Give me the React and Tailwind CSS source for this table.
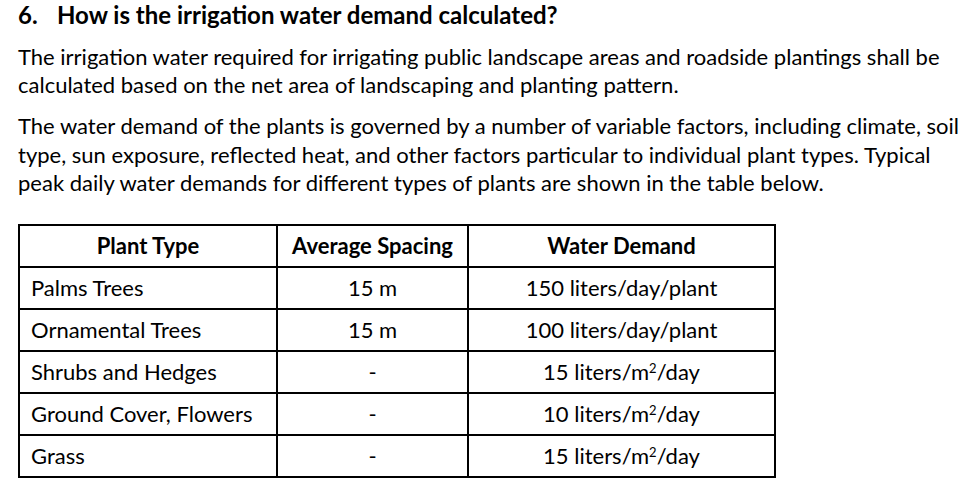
const rows = [
  { type: 'Palms Trees', spacing: '15 m', demand: <>150 liters/day/plant</> },
  { type: 'Ornamental Trees', spacing: '15 m', demand: <>100 liters/day/plant</> },
  { type: 'Shrubs and Hedges', spacing: '-', demand: <>15 liters/m<sup className="text-[13px]">2</sup>/day</> },
  { type: 'Ground Cover, Flowers', spacing: '-', demand: <>10 liters/m<sup className="text-[13px]">2</sup>/day</> },
  { type: 'Grass', spacing: '-', demand: <>15 liters/m<sup className="text-[13px]">2</sup>/day</> },
];

export default function App() {
  return (
    <div className="w-[962px] h-[481px] bg-white text-black overflow-hidden pl-[18px] pt-px font-['Lato',sans-serif]">
      <h2 className="flex text-[24px] font-bold leading-[28px] whitespace-nowrap">
        <span className="w-[39px]">6.</span>
        <span>How is the irrigation water demand calculated?</span>
      </h2>

      <p className="mt-[14px] text-[22px] leading-[27.5px] whitespace-nowrap">
        The irrigation water required for irrigating public landscape areas and roadside plantings shall be<br />
        calculated based on the net area of landscaping and planting pattern.
      </p>

      <p className="mt-[14px] text-[22px] leading-[28.5px] whitespace-nowrap">
        The water demand of the plants is governed by a number of variable factors, including climate, soil<br />
        type, sun exposure, reflected heat, and other factors particular to individual plant types. Typical<br />
        peak daily water demands for different types of plants are shown in the table below.
      </p>

      <table className="mt-[26px] border-collapse border-2 border-black text-[22px] leading-none">
        <thead>
          <tr className="h-[42px]">
            <th className="w-[258px] border-2 border-black font-bold">Plant Type</th>
            <th className="w-[191px] border-2 border-black font-bold">Average Spacing</th>
            <th className="w-[307px] border-2 border-black font-bold">Water Demand</th>
          </tr>
        </thead>
        <tbody>
          {rows.map(r => (
            <tr key={r.type} className="h-[42px]">
              <td className="border-2 border-black pl-[11px] text-left">{r.type}</td>
              <td className="border-2 border-black text-center">{r.spacing}</td>
              <td className="border-2 border-black text-center">{r.demand}</td>
            </tr>
          ))}
        </tbody>
      </table>
    </div>
  );
}
